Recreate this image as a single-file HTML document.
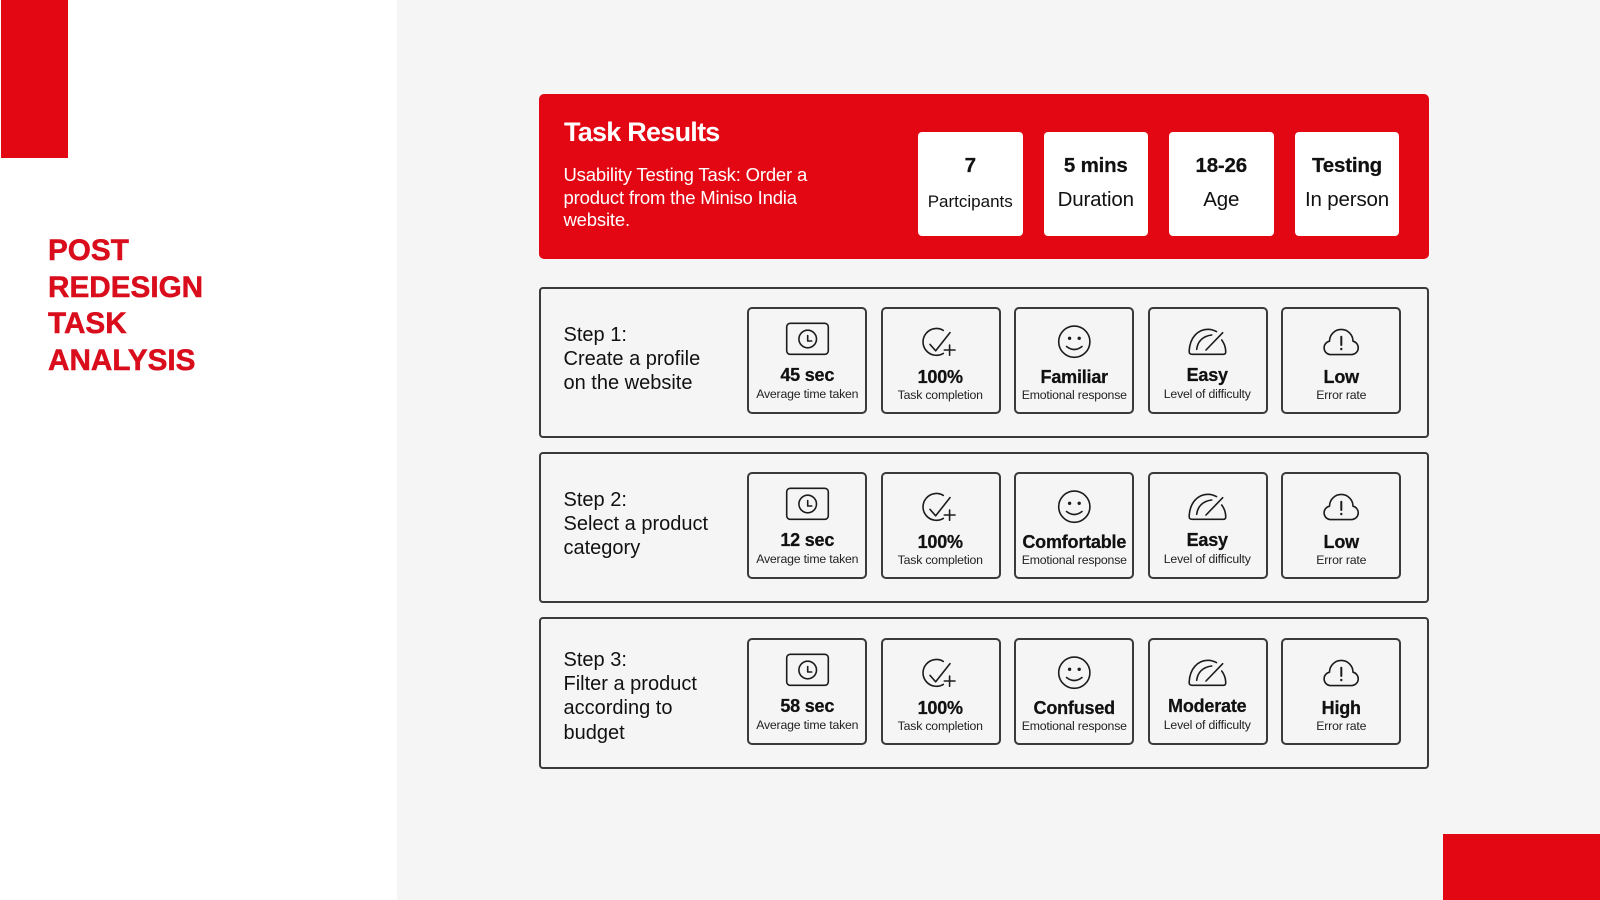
<!DOCTYPE html>
<html lang="en"><head><meta charset="utf-8"><title>Post Redesign Task Analysis</title>
<style>
*{box-sizing:border-box}
html,body{margin:0;padding:0;width:1600px;height:900px;overflow:hidden;background:#f5f5f5;font-family:"Liberation Sans",sans-serif;color:#111}
.a{position:absolute}
.left{left:0;top:0;width:397px;height:900px;background:#fff}
.red{background:#e30613}
h1{position:absolute;left:48px;top:233px;margin:0;font-size:30px;line-height:36.7px;font-weight:700;color:#d90d1c;transform:scaleX(.99);transform-origin:0 0;white-space:nowrap;-webkit-text-stroke:.5px #d90d1c}
.hd{left:539px;top:94px;width:890px;height:165px;background:#e30613;border-radius:5px}
.hd h2{position:absolute;left:25px;top:22px;margin:0;color:#fff;font-size:27px;line-height:32px;font-weight:700;letter-spacing:-.75px;white-space:nowrap}
.hd p{position:absolute;left:24.5px;top:70px;margin:0;color:#fff;font-size:18.5px;line-height:22.5px;letter-spacing:-.18px;white-space:nowrap}
.w{top:37.5px;width:104.5px;height:104.5px;background:#fff;border-radius:4px;text-align:center}
.w b{position:absolute;left:0;right:0;top:22px;font-size:20.5px;line-height:24px;letter-spacing:-.2px;-webkit-text-stroke:.25px #111}
.w span{position:absolute;left:0;right:0;top:56px;font-size:20.5px;line-height:24px;letter-spacing:-.15px;white-space:nowrap}
.st{left:539px;width:890px;height:151px;border:2px solid #3a3a3a;border-radius:4px}
.l{left:563.5px;font-size:20px;line-height:24.2px;white-space:nowrap;letter-spacing:0}
.c{width:120px;height:107px;border:2px solid #3a3a3a;border-radius:5px;text-align:center;background:#f5f5f5}
.c svg{position:absolute;left:-1.5px;top:-2px;width:119.5px;height:107.5px;fill:none;stroke:#1c1c1c;stroke-width:1.6;stroke-linecap:round;stroke-linejoin:round}
.c b{position:absolute;left:-1.5px;width:119.5px;font-size:18px;line-height:22px;letter-spacing:-.2px;white-space:nowrap;-webkit-text-stroke:.25px #111}
.c span{position:absolute;left:-1.5px;width:119.5px;font-size:12.3px;line-height:16px;letter-spacing:-.2px;color:#222;white-space:nowrap}
.n svg,.n b,.n span{left:-2.5px}
.u b{top:55px}.u span{top:77px}
.d b{top:57px}.d span{top:78px}
</style></head><body>
<div class="a left"></div>
<div class="a red" style="left:.5px;top:0;width:67px;height:157.5px"></div>
<div class="a red" style="left:1443px;top:833.5px;width:157px;height:66.5px"></div>
<h1>POST<br>REDESIGN<br>TASK<br>ANALYSIS</h1>

<svg width="0" height="0" style="position:absolute">
<defs>
<g id="i1"><rect x="38.7" y="16.3" width="41.6" height="31" rx="3.5"/><circle cx="59.7" cy="32" r="8.8"/><path d="M59.7 28.5V34H63.7"/></g>
<g id="i2"><path d="M62.3 23.4A13.4 13.4 0 1 0 62.3 46.4"/><path d="M49 37.4L54.7 43.8L69 25.6"/><path d="M63.3 43H74M68.6 38V48.2"/></g>
<g id="i3"><circle cx="59.3" cy="34.7" r="15.6"/><circle cx="54.6" cy="31.3" r=".9" fill="#1c1c1c"/><circle cx="64.2" cy="31.3" r=".9" fill="#1c1c1c"/><path d="M51.5 39.5Q59.3 45.5 67 39.5"/></g>
<g id="i4"><path d="M68.5 24.6C65.5 23 62.5 22.3 60 22.3C49.5 22.3 42 31 41.2 43.5C41 46.5 42 47.3 44 47.3H75.5C77.3 47.3 77.9 46 77.7 44C77.5 40 76 36 73.7 33"/><path d="M48.7 42.3C49.5 34.5 55 29 63.7 28"/><path d="M58 43L74.7 25.7"/></g>
<g id="i5"><path d="M48 47.6H70A6.8 6.8 0 0 0 71 34.2A11.7 11.7 0 0 0 47.5 34.2A6.8 6.8 0 0 0 48 47.6Z"/><path d="M59.3 29.7V38" stroke-width="2"/><path d="M59.3 41.8V42.2" stroke-width="2.2"/></g>
</defs></svg>

<div class="a hd">
<h2>Task Results</h2>
<p>Usability Testing Task: Order a<br>product from the Miniso India<br>website.</p>
<div class="a w" style="left:379px"><b>7</b><span style="font-size:17px;top:58px;letter-spacing:0">Partcipants</span></div>
<div class="a w" style="left:504.5px"><b>5 mins</b><span>Duration</span></div>
<div class="a w" style="left:630px"><b>18-26</b><span>Age</span></div>
<div class="a w" style="left:756px;width:104px"><b>Testing</b><span>In person</span></div>
</div>

<!-- Step 1 -->
<div class="a st" style="top:287px"></div>
<div class="a l" style="top:323px">Step 1:<br>Create a profile<br>on the website</div>
<div class="a c u" style="left:747px;top:307px"><svg viewBox="0 0 119.5 107.5"><use href="#i1"/></svg><b>45 sec</b><span>Average time taken</span></div>
<div class="a c d n" style="left:881px;top:307px"><svg viewBox="0 0 119.5 107.5"><use href="#i2"/></svg><b>100%</b><span>Task completion</span></div>
<div class="a c d" style="left:1014px;top:307px"><svg viewBox="0 0 119.5 107.5"><use href="#i3"/></svg><b>Familiar</b><span>Emotional response</span></div>
<div class="a c u n" style="left:1148px;top:307px"><svg viewBox="0 0 119.5 107.5"><use href="#i4"/></svg><b>Easy</b><span>Level of difficulty</span></div>
<div class="a c d" style="left:1281px;top:307px"><svg viewBox="0 0 119.5 107.5"><use href="#i5"/></svg><b>Low</b><span>Error rate</span></div>

<!-- Step 2 -->
<div class="a st" style="top:452px"></div>
<div class="a l" style="top:488px">Step 2:<br>Select a product<br>category</div>
<div class="a c u" style="left:747px;top:472px"><svg viewBox="0 0 119.5 107.5"><use href="#i1"/></svg><b>12 sec</b><span>Average time taken</span></div>
<div class="a c d n" style="left:881px;top:472px"><svg viewBox="0 0 119.5 107.5"><use href="#i2"/></svg><b>100%</b><span>Task completion</span></div>
<div class="a c d" style="left:1014px;top:472px"><svg viewBox="0 0 119.5 107.5"><use href="#i3"/></svg><b>Comfortable</b><span>Emotional response</span></div>
<div class="a c u n" style="left:1148px;top:472px"><svg viewBox="0 0 119.5 107.5"><use href="#i4"/></svg><b>Easy</b><span>Level of difficulty</span></div>
<div class="a c d" style="left:1281px;top:472px"><svg viewBox="0 0 119.5 107.5"><use href="#i5"/></svg><b>Low</b><span>Error rate</span></div>

<!-- Step 3 -->
<div class="a st" style="top:617px;height:151.5px"></div>
<div class="a l" style="top:648px">Step 3:<br>Filter a product<br>according to<br>budget</div>
<div class="a c u" style="left:747px;top:638px"><svg viewBox="0 0 119.5 107.5"><use href="#i1"/></svg><b>58 sec</b><span>Average time taken</span></div>
<div class="a c d n" style="left:881px;top:638px"><svg viewBox="0 0 119.5 107.5"><use href="#i2"/></svg><b>100%</b><span>Task completion</span></div>
<div class="a c d" style="left:1014px;top:638px"><svg viewBox="0 0 119.5 107.5"><use href="#i3"/></svg><b>Confused</b><span>Emotional response</span></div>
<div class="a c u n" style="left:1148px;top:638px"><svg viewBox="0 0 119.5 107.5"><use href="#i4"/></svg><b>Moderate</b><span>Level of difficulty</span></div>
<div class="a c d" style="left:1281px;top:638px"><svg viewBox="0 0 119.5 107.5"><use href="#i5"/></svg><b>High</b><span>Error rate</span></div>
</body></html>
